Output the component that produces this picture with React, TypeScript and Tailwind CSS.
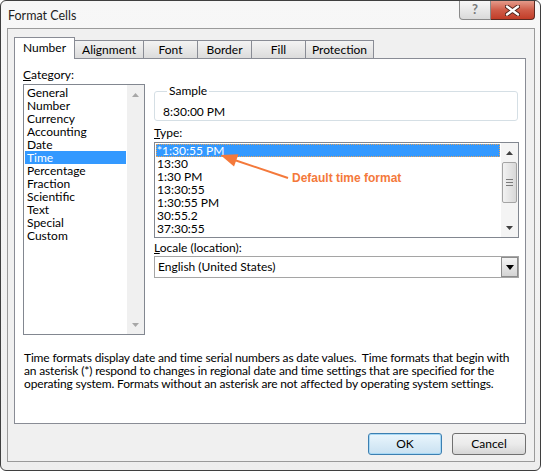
import React from 'react'

const categories = ['General', 'Number', 'Currency', 'Accounting', 'Date', 'Time', 'Percentage', 'Fraction', 'Scientific', 'Text', 'Special', 'Custom']
const types = ['*1:30:55 PM', '13:30', '1:30 PM', '13:30:55', '1:30:55 PM', '30:55.2', '37:30:55']
const tabs = [
  { name: 'Number', w: 'w-[61px]' },
  { name: 'Alignment', w: 'w-[69px]' },
  { name: 'Font', w: 'w-[54px]' },
  { name: 'Border', w: 'w-[54px]' },
  { name: 'Fill', w: 'w-[54px]' },
  { name: 'Protection', w: 'w-[68px]' },
]

const Arrow = ({ up, color }: { up?: boolean; color: string }) => (
  <svg width="7" height="4" viewBox="0 0 7 4">
    <path d={up ? 'M0 4 L3.5 0 L7 4 Z' : 'M0 0 L3.5 4 L7 0 Z'} fill={color} />
  </svg>
)

const App = () => {
  return (
    <div className="relative flex h-[471px] w-[541px] flex-col overflow-hidden rounded-[6px] border border-[#3f3f3f] bg-gradient-to-b from-[#f7f7f7] to-[#eeeeee] font-['Lato','Noto_Sans',sans-serif] text-[12px] text-black">
      {/* title bar */}
      <div className="flex h-[27px] justify-between">
        <div className="pl-[7px] pt-[6px] text-[12.5px] leading-[17px] text-[#1e1e1e]">Format Cells</div>
        <div className="mr-[5px] flex items-start">
          <div className="flex h-[19px] w-[32px] items-center justify-center rounded-bl-[4px] border border-t-0 border-[#8a8a8a] bg-gradient-to-b from-[#f7f7f7] to-[#dadada] text-[13px] font-bold text-[#7a7a7a]">
            ?
          </div>
          <div className="flex h-[19px] w-[44px] items-center justify-center rounded-br-[4px] border border-l-0 border-t-0 border-[#5c2a22] bg-gradient-to-b from-[#e49a8a] via-[#cf5c48] to-[#c23c27]">
            <svg width="15" height="11" viewBox="0 0 15 11">
              <path d="M2 1.5 L13 9.5 M13 1.5 L2 9.5" stroke="#4a2019" strokeWidth="4.2" strokeLinecap="round" />
              <path d="M2 1.5 L13 9.5 M13 1.5 L2 9.5" stroke="#ffffff" strokeWidth="2.4" strokeLinecap="round" />
            </svg>
          </div>
        </div>
      </div>

      {/* dialog body */}
      <div className="mb-[8px] ml-[6px] mr-[5px] flex flex-1 flex-col border border-[#9a9a9a] bg-[#f0f0f0]">
        <div className="ml-[6px] mt-[8px] flex h-[21px] items-end">
          {tabs.map((t, i) =>
            i === 0 ? (
              <div key={t.name} className={`relative z-10 -mb-px flex h-[22px] ${t.w} items-center justify-center border border-b-0 border-[#898c95] bg-white pb-[1px]`}>
                {t.name}
              </div>
            ) : (
              <div key={t.name} className={`flex h-[18px] ${t.w} items-center justify-center border border-b-0 border-l-0 border-[#898c95] bg-gradient-to-b from-[#f3f3f3] to-[#dcdcdc] pt-[1px]`}>
                {t.name}
              </div>
            ),
          )}
        </div>

        {/* tab panel */}
        <div className="ml-[6px] flex h-[366px] w-[512px] flex-col border border-[#898c95] bg-white">
          <div className="flex gap-[9px] pl-[8px]">
            {/* category column */}
            <div className="flex w-[122px] flex-col pt-[8px]">
              <div className="h-[15px] leading-[15px]">
                <span className="underline">C</span>ategory:
              </div>
              <div className="mt-[2px] flex h-[251px] border border-[#828790] bg-white">
                <div className="flex-1 p-px">
                  {categories.map((c) => (
                    <div key={c} className={`h-[13px] pl-[2px] leading-[13px] ${c === 'Time' ? 'bg-[#3399ff] text-white' : ''}`}>
                      {c}
                    </div>
                  ))}
                </div>
                <div className="flex w-[17px] flex-col items-center justify-between bg-[#f0f0f0] pb-[7px] pt-[8px]">
                  <Arrow up color="#a7a7a7" />
                  <Arrow color="#a7a7a7" />
                </div>
              </div>
            </div>

            {/* right column */}
            <div className="flex w-[365px] flex-col pt-[25px]">
              <fieldset className="mr-[1px] rounded-[3px] border border-[#d5dfe5] pb-[1px] pl-[8px]">
                <legend className="ml-[4px] px-[2px] leading-[14px]">Sample</legend>
                <div className="pt-[7px] leading-[14px]">8:30:00 PM</div>
              </fieldset>

              <div className="mt-[4px] h-[15px] leading-[15px]">
                <span className="underline">T</span>ype:
              </div>
              <div className="mt-[2px] flex h-[96px] border border-[#828790] bg-white">
                <div className="flex-1 p-px">
                  {types.map((t, i) =>
                    i === 0 ? (
                      <div key={t} className="h-[13px] border border-dotted border-[#e3a25c] bg-[#3399ff] leading-[11px] text-white">
                        {t}
                      </div>
                    ) : (
                      <div key={t} className="h-[13px] pl-[1px] leading-[13px]">
                        {t}
                      </div>
                    ),
                  )}
                </div>
                <div className="flex w-[17px] flex-col items-center bg-[#f4f4f4]">
                  <div className="flex h-[19px] items-center">
                    <Arrow up color="#404040" />
                  </div>
                  <div className="flex h-[41px] w-[15px] flex-col items-center justify-center gap-[2px] rounded-[2px] border border-[#a4a4a4] bg-gradient-to-r from-[#f2f2f2] to-[#d8d8d8]">
                    <div className="h-px w-[7px] bg-[#7a7a7a]" />
                    <div className="h-px w-[7px] bg-[#7a7a7a]" />
                    <div className="h-px w-[7px] bg-[#7a7a7a]" />
                  </div>
                  <div className="flex flex-1 items-end pb-[7px]">
                    <Arrow color="#404040" />
                  </div>
                </div>
              </div>

              <div className="mt-[2px] h-[15px] leading-[15px]">
                <span className="underline">L</span>ocale (location):
              </div>
              <div className="mt-[1px] flex h-[22px] items-center border border-[#a5a5a5] bg-white pl-[3px]">
                <div className="flex-1">English (United States)</div>
                <div className="flex h-[20px] w-[17px] items-center justify-center border border-[#8c8c8c] bg-gradient-to-b from-[#f4f4f4] to-[#d4d4d4]">
                  <svg width="8" height="5" viewBox="0 0 8 5">
                    <path d="M0 0 L4 5 L8 0 Z" fill="#000" />
                  </svg>
                </div>
              </div>
            </div>
          </div>

          <div className="mt-[16px] pl-[9px] leading-[13px] tracking-[-0.16px]">
            <div className="whitespace-nowrap">Time formats display date and time serial numbers as date values.&nbsp; Time formats that begin with</div>
            <div className="whitespace-nowrap">an asterisk (*) respond to changes in regional date and time settings that are specified for the</div>
            <div className="whitespace-nowrap">operating system. Formats without an asterisk are not affected by operating system settings.</div>
          </div>
        </div>

        {/* buttons */}
        <div className="ml-[6px] mt-[9px] flex w-[512px] justify-end gap-[10px]">
          <button className="h-[22px] w-[74px] rounded-[3px] border border-[#3c7fb1] bg-gradient-to-b from-[#eaf6fd] to-[#c9e1f1] shadow-[inset_0_0_0_1px_#a7d8f5]">
            OK
          </button>
          <button className="h-[22px] w-[74px] rounded-[3px] border border-[#707070] bg-gradient-to-b from-[#f2f2f2] via-[#ebebeb] to-[#d6d6d6]">
            Cancel
          </button>
        </div>
      </div>

      {/* annotation */}
      <svg className="pointer-events-none absolute left-0 top-0" width="541" height="471" viewBox="0 0 541 471">
        <line x1="287" y1="177" x2="232" y2="158.5" stroke="#f4793b" strokeWidth="2" />
        <polygon points="219.5,154 237.5,153.2 233,165.5" fill="#f4793b" />
      </svg>
      <div className="pointer-events-none absolute left-[291px] top-[169px] whitespace-nowrap font-['Liberation_Sans',Arial,sans-serif] text-[12px] font-bold leading-[16px] text-[#f4793b]">
        Default time format
      </div>
    </div>
  )
}

export default App
